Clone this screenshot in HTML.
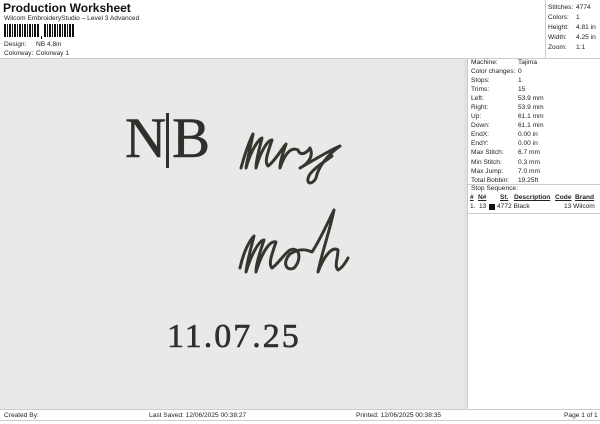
<!DOCTYPE html>
<html><head><meta charset="utf-8"><style>
*{margin:0;padding:0;box-sizing:border-box}
body{width:600px;height:424px;background:#fff;font-family:"Liberation Sans",sans-serif;color:#222;position:relative;overflow:hidden;font-size:6.6px}
.a{position:absolute;white-space:nowrap}
</style></head><body>
<div class="a" style="left:3px;top:1px;font-size:12px;font-weight:bold;color:#111">Production Worksheet</div>
<div class="a" style="left:4px;top:15px">Wilcom EmbroideryStudio – Level 3 Advanced</div>
<svg class="a" style="left:4px;top:24px" width="72" height="16">
<g fill="#111">
<rect x="0" y="0" width="2" height="13"/><rect x="3" y="0" width="1" height="13"/><rect x="5" y="0" width="2" height="13"/><rect x="8" y="0" width="1" height="13"/><rect x="10" y="0" width="2" height="13"/><rect x="13" y="0" width="1" height="13"/><rect x="15" y="0" width="2" height="13"/><rect x="18" y="0" width="1" height="13"/><rect x="20" y="0" width="2" height="13"/><rect x="23" y="0" width="1" height="13"/><rect x="25" y="0" width="2" height="13"/><rect x="28" y="0" width="1" height="13"/><rect x="30" y="0" width="2" height="13"/><rect x="33" y="0" width="2" height="13"/>
<rect x="37" y="12" width="1" height="3"/>
<rect x="40" y="0" width="2" height="13"/><rect x="43" y="0" width="1" height="13"/><rect x="45" y="0" width="2" height="13"/><rect x="48" y="0" width="1" height="13"/><rect x="50" y="0" width="2" height="13"/><rect x="53" y="0" width="1" height="13"/><rect x="55" y="0" width="2" height="13"/><rect x="58" y="0" width="1" height="13"/><rect x="60" y="0" width="2" height="13"/><rect x="63" y="0" width="1" height="13"/><rect x="65" y="0" width="2" height="13"/><rect x="68" y="0" width="2" height="13"/>
</g></svg>
<div class="a" style="left:4px;top:41px">Design:</div><div class="a" style="left:36px;top:41px">NB 4,8in</div>
<div class="a" style="left:4px;top:50px">Colorway:</div><div class="a" style="left:36px;top:50px">Colorway 1</div>
<div class="a" style="left:0;top:58px;width:600px;height:1px;background:#ccc"></div>
<div class="a" style="left:545px;top:0;width:1px;height:58px;background:#ccc"></div>
<div class="a" style="left:548px;top:3px;line-height:10px">Stitches:<br>Colors:<br>Height:<br>Width:<br>Zoom:</div>
<div class="a" style="left:576px;top:3px;line-height:10px">4774<br>1<br>4.81 in<br>4.25 in<br>1:1</div>
<div class="a" style="left:0;top:59px;width:464px;height:350px;background:#e9e9e9"></div>
<div class="a" style="left:464px;top:59px;width:3px;height:350px;background:#e2e2e2"></div>
<div class="a" style="left:467px;top:59px;width:1px;height:350px;background:#ccc"></div>
<div class="a" style="left:125px;top:106px;font-family:'Liberation Serif',serif;font-size:57px;color:#2f2f2b;-webkit-text-stroke:0.5px #2f2f2b">N</div>
<div class="a" style="left:166px;top:113px;width:3px;height:55px;background:#2f2f2b"></div>
<div class="a" style="left:172px;top:106px;font-family:'Liberation Serif',serif;font-size:57px;color:#2f2f2b;-webkit-text-stroke:0.5px #2f2f2b">B</div>
<svg class="a" style="left:0;top:0" width="464" height="409">
<g fill="none" stroke="#36362f" stroke-width="3" stroke-linecap="round" stroke-linejoin="round">
<path d="M241 168 C246 150 251 138 253 134 C250 150 247 160 246 168 C251 150 258 140 262 138 C259 150 256 160 256 168 C261 150 268 140 272 140 C268 152 264 162 268 166 C276 160 282 148 286 144 C282 156 280 162 280 168 C284 156 290 146 298 150 C300 156 306 154 310 148 C314 156 308 164 300 168 C314 160 330 150 340 146 C326 156 318 168 316 178 C312 186 304 184 310 174 C318 164 328 160 332 156"/>
<path d="M240 268 C244 250 250 240 254 236 C250 252 247 262 246 272 C252 252 260 240 264 240 C260 252 256 264 256 272 C262 252 270 240 276 242 C272 254 268 264 272 268 C278 264 284 254 290 250 C300 246 302 260 294 268 C286 272 282 262 290 254 C296 250 304 248 312 252 C320 240 328 222 334 210 C330 230 322 252 318 272 C324 256 332 246 338 250 C338 258 334 266 338 270 C342 268 346 262 348 258"/>
</g></svg>
<div class="a" style="left:167px;top:318px;font-family:'Liberation Serif',serif;font-size:34px;color:#2f2f2b;letter-spacing:2px;-webkit-text-stroke:0.6px #2f2f2b">11.07.25</div>
<div class="a" style="left:471px;top:58px;line-height:9.05px">Machine:<br>Color changes:<br>Stops:<br>Trims:<br>Left:<br>Right:<br>Up:<br>Down:<br>EndX:<br>EndY:<br>Max Stitch:<br>Min Stitch:<br>Max Jump:<br>Total Bobbin:</div>
<div class="a" style="left:518px;top:58px;line-height:9.05px">Tajima<br>0<br>1<br>15<br>53.9 mm<br>53.9 mm<br>61.1 mm<br>61.1 mm<br>0.00 in<br>0.00 in<br>6.7 mm<br>0.3 mm<br>7.0 mm<br>19.25ft</div>
<div class="a" style="left:468px;top:184px;width:132px;height:1px;background:#ccc"></div>
<div class="a" style="left:471px;top:185px">Stop Sequence:</div>
<div class="a" style="left:470px;top:194px;font-weight:bold;text-decoration:underline">#</div>
<div class="a" style="left:478px;top:194px;font-weight:bold;text-decoration:underline">N#</div>
<div class="a" style="left:500px;top:194px;font-weight:bold;text-decoration:underline">St.</div>
<div class="a" style="left:514px;top:194px;font-weight:bold;text-decoration:underline">Description</div>
<div class="a" style="left:555px;top:194px;font-weight:bold;text-decoration:underline">Code</div>
<div class="a" style="left:575px;top:194px;font-weight:bold;text-decoration:underline">Brand</div>
<div class="a" style="left:470px;top:203px">1.</div>
<div class="a" style="left:479px;top:203px">13</div>
<div class="a" style="left:489px;top:204px;width:6px;height:6px;background:#111"></div>
<div class="a" style="left:497px;top:203px">4772 Black</div>
<div class="a" style="left:564px;top:203px">13 Wilcom</div>
<div class="a" style="left:468px;top:213px;width:132px;height:1px;background:#ccc"></div>
<div class="a" style="left:0;top:409px;width:600px;height:1px;background:#ccc"></div>
<div class="a" style="left:0;top:420px;width:600px;height:1px;background:#ccc"></div>
<div class="a" style="left:4px;top:412px">Created By:</div>
<div class="a" style="left:149px;top:412px">Last Saved: 12/06/2025 00:38:27</div>
<div class="a" style="left:356px;top:412px">Printed: 12/06/2025 00:38:35</div>
<div class="a" style="left:564px;top:412px">Page 1 of 1</div>
</body></html>
